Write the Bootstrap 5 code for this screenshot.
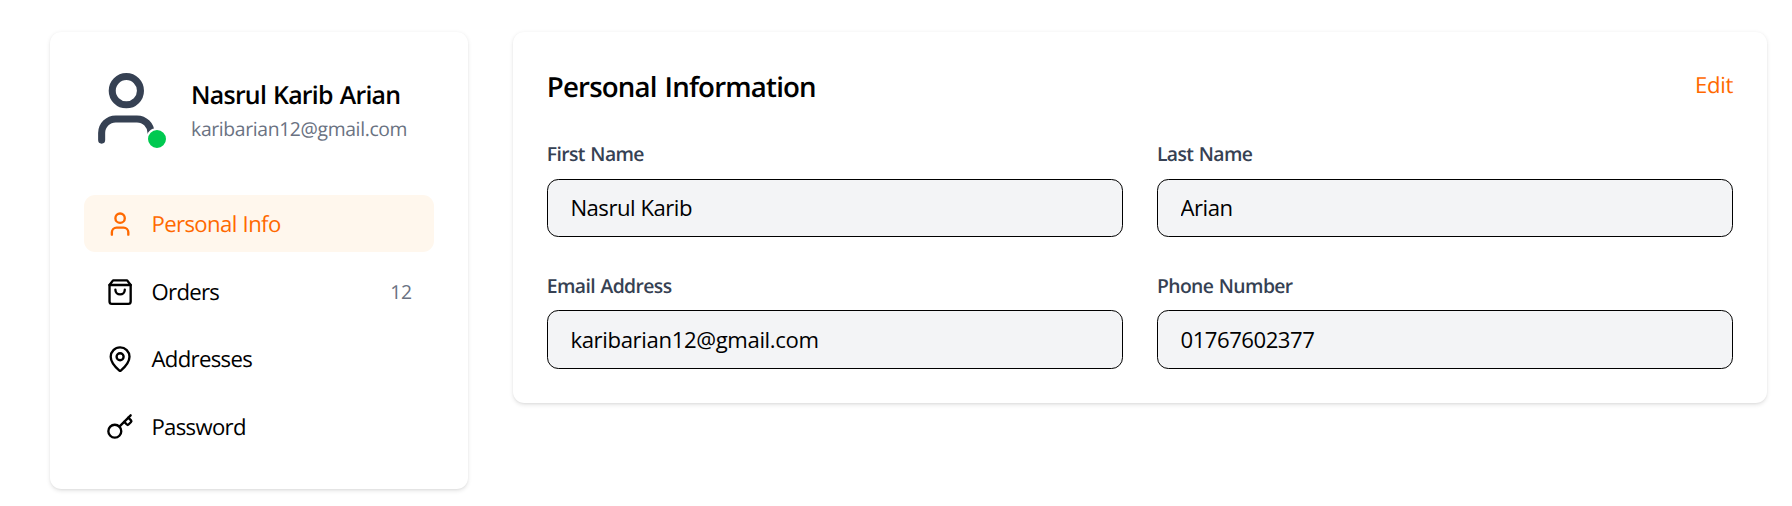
<!DOCTYPE html>
<html lang="en">
<head>
<meta charset="utf-8">
<meta name="viewport" content="width=device-width, initial-scale=1">
<title>My Account</title>
<link href="https://cdn.jsdelivr.net/npm/bootstrap@5.3.0/dist/css/bootstrap.min.css" rel="stylesheet">
<style>
  body { font-family: "Open Sans", "Noto Sans", sans-serif; font-size: 22.15px; line-height: 33.9px; color: #000; background: #fff; letter-spacing: -.5px; text-rendering: geometricPrecision; }
  .account { padding: 32px 25px 0 50px; gap: 45px; }
  .panel { background: #fff; border-radius: 11.3px; box-shadow: 0 1.4px 4.2px rgba(0,0,0,.1), 0 1.4px 2.8px -1.4px rgba(0,0,0,.1); padding: 33.8px; }
  .side { width: 418px; padding-bottom: 34.2px; }
  .avatar { width: 84.7px; height: 84.7px; color: #364153; }
  .status { width: 22.6px; height: 22.6px; background: #00c950; border: 2.4px solid #fff; }
  .profile { gap: 22.6px; margin-bottom: 44.4px; }
  .user-name { font-size: 24.9px; line-height: 38.5px; padding-top: 3.2px; font-weight: 600; letter-spacing: -.75px; word-spacing: 1.2px; }
  .user-mail { font-size: 19.35px; line-height: 28.2px; color: #6a7282; letter-spacing: -.36px; }
  .menu { gap: 10.7px; }
  .menu .nav-link { height: 57px; padding: 1.2px 22.6px 0; gap: 16.9px; color: #000; border-radius: 11.3px; letter-spacing: -.68px; }
  .menu .nav-link.active { background: #fff7ed; color: #ff6900; letter-spacing: -.62px; word-spacing: .8px; }
  .menu svg { width: 28.2px; height: 28.2px; }
  .menu span { padding-top: 1.8px; }
  .menu .count { font-size: 19.35px; color: #6a7282; letter-spacing: -.4px; padding-top: .6px; }
  .stroke { fill: none; stroke: currentColor; stroke-width: 2; stroke-linecap: round; stroke-linejoin: round; flex: none; }
  .main-panel { padding-bottom: 34px; }
  .title { font-size: 27.65px; line-height: 40px; padding-top: 1px; font-weight: 600; letter-spacing: -.82px; word-spacing: 1.5px; }
  .edit { color: #ff6900; line-height: 38px; letter-spacing: -.3px; }
  .fields { margin-top: 33.6px; display: grid; grid-template-columns: 1fr 1fr; gap: 34.8px 33.9px; }
  .fields .form-label { font-size: 19.35px; line-height: 28.2px; font-weight: 600; color: #364153; margin-bottom: 10.3px; letter-spacing: -.6px; word-spacing: 1px; }
  .fields .form-control { height: 58.2px; padding: 0 22.6px 1px; font-size: 22.15px; letter-spacing: -.5px; color: #000; background: #f3f4f6; border: 1px solid #000; border-radius: 11.3px; }
  .fields .form-control[type=email] { letter-spacing: -.37px; }
</style>
</head>
<body class="min-vh-100">
<div class="account d-flex align-items-start">
  <aside class="panel side flex-shrink-0">
    <div class="profile d-flex align-items-center">
      <div class="avatar position-relative flex-shrink-0">
        <svg class="stroke w-100 h-100 d-block" viewBox="0 0 24 24"><path d="M19 21v-2a4 4 0 0 0-4-4H9a4 4 0 0 0-4 4v2"/><circle cx="12" cy="7" r="4"/></svg>
        <span class="status position-absolute bottom-0 end-0 rounded-circle"></span>
      </div>
      <div>
        <h2 class="user-name m-0 text-nowrap">Nasrul Karib Arian</h2>
        <p class="user-mail m-0">karibarian12@gmail.com</p>
      </div>
    </div>
    <nav class="menu nav flex-column">
      <a class="nav-link active d-flex align-items-center" href="#">
        <svg class="stroke" viewBox="0 0 24 24"><path d="M19 21v-2a4 4 0 0 0-4-4H9a4 4 0 0 0-4 4v2"/><circle cx="12" cy="7" r="4"/></svg>
        <span>Personal Info</span>
      </a>
      <a class="nav-link d-flex align-items-center" href="#">
        <svg class="stroke" viewBox="0 0 24 24"><path d="M6 2 3 6v14a2 2 0 0 0 2 2h14a2 2 0 0 0 2-2V6l-3-4Z"/><path d="M3 6h18"/><path d="M16 10a4 4 0 0 1-8 0"/></svg>
        <span>Orders</span><span class="count ms-auto">12</span>
      </a>
      <a class="nav-link d-flex align-items-center" href="#">
        <svg class="stroke" viewBox="0 0 24 24"><path d="M20 10c0 4.993-5.539 10.193-7.399 11.799a1 1 0 0 1-1.202 0C9.539 20.193 4 14.993 4 10a8 8 0 0 1 16 0"/><circle cx="12" cy="10" r="3"/></svg>
        <span>Addresses</span>
      </a>
      <a class="nav-link d-flex align-items-center" href="#">
        <svg class="stroke" viewBox="0 0 24 24"><path d="m15.5 7.5 2.3 2.3a1 1 0 0 0 1.4 0l2.1-2.1a1 1 0 0 0 0-1.4L19 4"/><path d="m21 2-9.6 9.6"/><circle cx="7.5" cy="15.5" r="5.5"/></svg>
        <span>Password</span>
      </a>
    </nav>
  </aside>
  <main class="panel main-panel flex-grow-1">
    <div class="d-flex justify-content-between align-items-start">
      <h1 class="title m-0">Personal Information</h1>
      <a class="edit text-decoration-none" href="#">Edit</a>
    </div>
    <form class="fields">
      <div><label class="form-label d-block" for="first">First Name</label><input class="form-control" id="first" type="text" value="Nasrul Karib"></div>
      <div><label class="form-label d-block" for="last">Last Name</label><input class="form-control" id="last" type="text" value="Arian"></div>
      <div><label class="form-label d-block" for="email">Email Address</label><input class="form-control" id="email" type="email" value="karibarian12@gmail.com"></div>
      <div><label class="form-label d-block" for="phone">Phone Number</label><input class="form-control" id="phone" type="tel" value="01767602377"></div>
    </form>
  </main>
</div>
<script src="https://cdn.jsdelivr.net/npm/bootstrap@5.3.0/dist/js/bootstrap.bundle.min.js"></script>
</body>
</html>
